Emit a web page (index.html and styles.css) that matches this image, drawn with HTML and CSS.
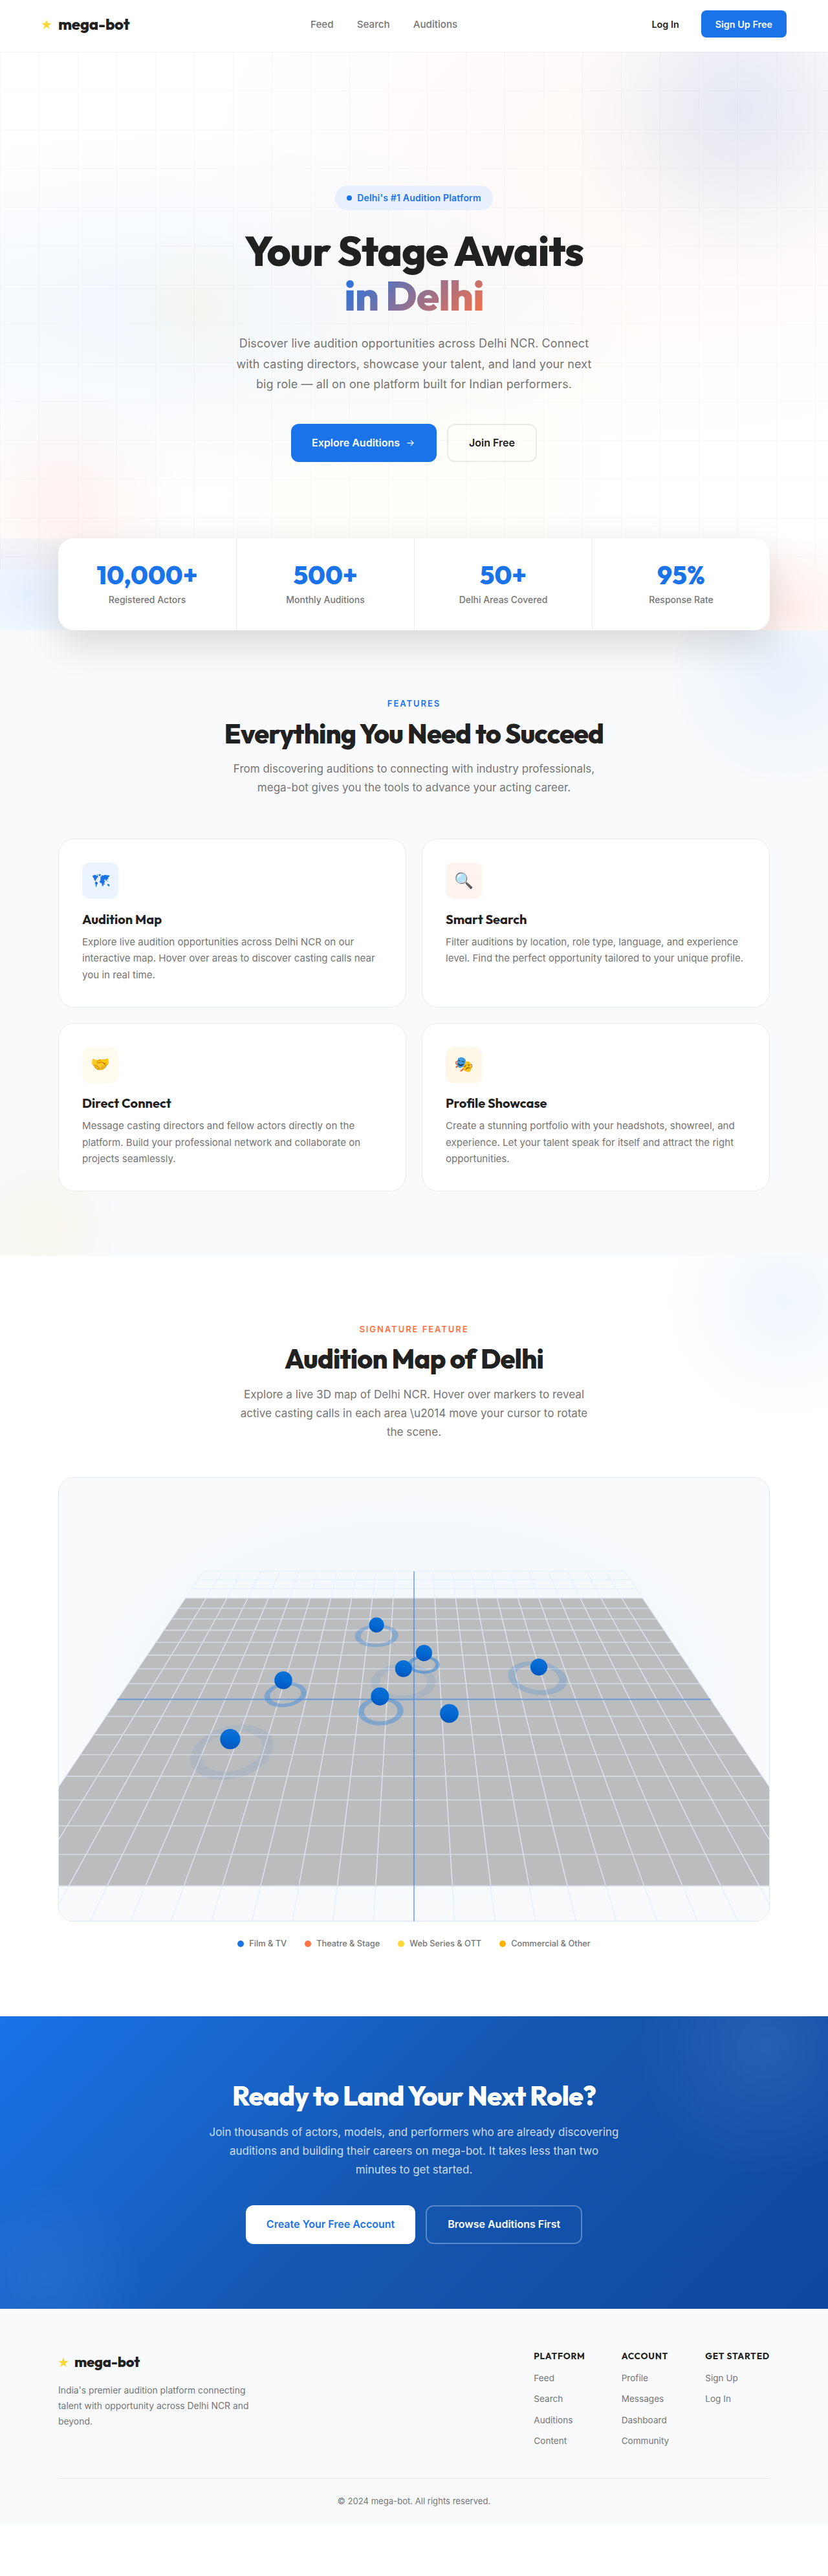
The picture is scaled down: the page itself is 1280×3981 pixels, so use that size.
FILE: index.html
```html
<!DOCTYPE html>
<html lang="en">
<head>
<meta charset="utf-8">
<title>mega-bot</title>
<link rel="stylesheet" href="styles.css">
</head>
<body>
<header class="nav">
  <a class="logo"><svg class="star" viewBox="0 0 16 15.2"><path d="M8 0l1.89 5.8H16l-4.95 3.6 1.89 5.8L8 11.6l-4.94 3.6 1.89-5.8L0 5.8h6.11z"/></svg>mega-bot</a>
  <nav class="nav-links"><a>Feed</a><a>Search</a><a>Auditions</a></nav>
  <div class="nav-actions"><a class="login">Log In</a><a class="signup">Sign Up Free</a></div>
</header>

<section class="hero">
  <div class="pill"><i></i>Delhi's #1 Audition Platform</div>
  <h1>Your Stage Awaits<br><span>in Delhi</span></h1>
  <p>Discover live audition opportunities across Delhi NCR. Connect with casting directors, showcase your talent, and land your next big role — all on one platform built for Indian performers.</p>
  <div class="actions"><a class="btn primary">Explore Auditions <span class="arrow">→</span></a><a class="btn outline">Join Free</a></div>
</section>

<section class="stats">
  <div class="stats-card">
    <div class="stat"><b>10,000+</b><span>Registered Actors</span></div>
    <div class="stat"><b>500+</b><span>Monthly Auditions</span></div>
    <div class="stat"><b>50+</b><span>Delhi Areas Covered</span></div>
    <div class="stat"><b>95%</b><span>Response Rate</span></div>
  </div>
</section>

<section class="section features">
  <div class="head">
    <div class="label">Features</div>
    <h2>Everything You Need to Succeed</h2>
    <p>From discovering auditions to connecting with industry professionals, mega-bot gives you the tools to advance your acting career.</p>
  </div>
  <div class="cards">
    <article class="card">
      <div class="icon blue"><svg width="26" height="20" viewBox="0 0 26 20"><path d="M0 2.5L2 1.5 4 1 6 2 7 3 8 2l1 1.5L8 5 6.500 6 6 8 5 8.500 5.500 10 4.500 10.500 2.500 8.500 2 6 .5 4.500zM6.500 1L8.500 0 8 1.500 7 2zM10 0l3 .5-.5 1.500-2 1.500L9.500 2zM4 12l2-.5L8 13v2l-1.500 1.500L6 19.500H5L4.800 16 4 14zM12 4.500l1.500-.5 0-1.500 1.500-.8 2 .3L19 1l3 .5 4 .3v2l-1.500.5V6l-1 1v1.500l-1.500-.3-.5 2-.8.3-.7-2.200-1.500.2L17.500 10h1.700l-.7 3-.8 1-.2 2-1.500 2.500H15L14.300 14l-2.300-.5-1-1.700L11.500 10l1-1-.5-1.500 1-1-1-.5zM18.300 14l.7.5-.6 2-.6-.5zM22 10l2 .5.300.8-1.500-.3zM23 15.500l2-.5 1 1.200V19l-1.300-.5-1.700-1.500z"/></svg></div>
      <h3>Audition Map</h3>
      <p>Explore live audition opportunities across Delhi NCR on our interactive map. Hover over areas to discover casting calls near you in real time.</p>
    </article>
    <article class="card">
      <div class="icon coral">🔍</div>
      <h3>Smart Search</h3>
      <p>Filter auditions by location, role type, language, and experience level. Find the perfect opportunity tailored to your unique profile.</p>
    </article>
    <article class="card">
      <div class="icon yellow">🤝</div>
      <h3>Direct Connect</h3>
      <p>Message casting directors and fellow actors directly on the platform. Build your professional network and collaborate on projects seamlessly.</p>
    </article>
    <article class="card">
      <div class="icon amber">🎭</div>
      <h3>Profile Showcase</h3>
      <p>Create a stunning portfolio with your headshots, showreel, and experience. Let your talent speak for itself and attract the right opportunities.</p>
    </article>
  </div>
</section>

<section class="section map-section">
  <div class="head">
    <div class="label coral-text">Signature Feature</div>
    <h2>Audition Map of Delhi</h2>
    <p>Explore a live 3D map of Delhi NCR. Hover over markers to reveal active casting calls in each area \u2014 move your cursor to rotate the scene.</p>
  </div>
  <div class="map">
    <svg id="scene" viewBox="0 0 1098 685.5">
      <defs>
        <linearGradient id="ball" x1=".55" y1="0" x2=".4" y2="1">
          <stop offset="0" stop-color="#0a70d6"/><stop offset=".5" stop-color="#0369d3"/><stop offset="1" stop-color="#0054bd"/>
        </linearGradient>
      </defs>
    </svg>
  </div>
  <div class="legend">
    <span><i class="c-blue"></i>Film &amp; TV</span><span><i class="c-coral"></i>Theatre &amp; Stage</span><span><i class="c-yellow"></i>Web Series &amp; OTT</span><span><i class="c-amber"></i>Commercial &amp; Other</span>
  </div>
</section>

<section class="cta">
  <h2>Ready to Land Your Next Role?</h2>
  <p>Join thousands of actors, models, and performers who are already discovering auditions and building their careers on mega-bot. It takes less than two minutes to get started.</p>
  <div class="actions"><a class="btn white">Create Your Free Account</a><a class="btn ghost">Browse Auditions First</a></div>
</section>

<footer class="footer">
  <div class="footer-top">
    <div class="about">
      <a class="logo"><svg class="star" viewBox="0 0 16 15.2"><path d="M8 0l1.89 5.8H16l-4.95 3.6 1.89 5.8L8 11.6l-4.94 3.6 1.89-5.8L0 5.8h6.11z"/></svg>mega-bot</a>
      <p>India's premier audition platform connecting talent with opportunity across Delhi NCR and beyond.</p>
    </div>
    <div class="cols">
      <div class="col"><h4>Platform</h4><a>Feed</a><a>Search</a><a>Auditions</a><a>Content</a></div>
      <div class="col"><h4>Account</h4><a>Profile</a><a>Messages</a><a>Dashboard</a><a>Community</a></div>
      <div class="col"><h4>Get Started</h4><a>Sign Up</a><a>Log In</a></div>
    </div>
  </div>
  <div class="copy">© 2024 mega-bot. All rights reserved.</div>
</footer>
<script src="map.js"></script>
</body>
</html>
```
FILE: styles.css
```css
* {
  box-sizing: border-box;
  margin: 0;
  padding: 0;
}
body {
  font-family: Inter, "Liberation Sans", sans-serif;
  color: #212121;
  background: #fff;
  line-height: 1.6;
}
h1, h2, h3, h4, .logo, .stat b {
  font-family: Outfit, Lato, sans-serif;
}

/* Navigation */
.nav {
  height: 80px;
  padding: 0 64px 6px;
  display: flex;
  align-items: center;
  background: #fff;
}
.logo {
  display: flex;
  align-items: center;
  gap: 10px;
  font-weight: 800;
  font-size: 24px;
  letter-spacing: -.01em;
  line-height: 1.6;
}
.nav .logo {
  width: 416px;
  padding-top: 1px;
}
.star {
  width: 16px;
  height: 15.2px;
  fill: #fdd835;
}
.nav-links {
  display: flex;
  gap: 36px;
  padding-top: 2px;
  font-size: 15.2px;
  font-weight: 500;
  color: #757575;
}
.nav-actions {
  display: flex;
  align-items: center;
  gap: 34px;
  margin-left: auto;
  font-size: 14.4px;
  font-weight: 600;
}
.login {
  padding-top: 1px;
}
.signup {
  height: 42px;
  padding: 10px 22px;
  border-radius: 8px;
  background: #1a73e8;
  color: #fff;
  line-height: 23px;
}

/* Hero */
.hero {
  height: 800px;
  padding-top: 207px;
  display: flex;
  flex-direction: column;
  align-items: center;
  text-align: center;
  background:
    linear-gradient(rgba(0, 0, 0, .022) 1px, transparent 1px) 0 0 / 60px 60px,
    linear-gradient(90deg, rgba(0, 0, 0, .022) 1px, transparent 1px) 0 0 / 60px 60px,
    radial-gradient(circle at 1143px 90px, rgba(26, 105, 222, .11), rgba(26, 100, 215, .065) 110px, rgba(26, 100, 215, .02) 200px, transparent 265px),
    radial-gradient(circle at 300px 390px, rgba(253, 216, 53, .075), rgba(253, 216, 53, .03) 60px, transparent 115px),
    radial-gradient(circle at 100px 705px, rgba(255, 95, 67, .085), rgba(255, 95, 67, .045) 80px, transparent 185px),
    radial-gradient(ellipse at 20% 50%, rgba(26, 115, 232, .06), transparent 50%),
    radial-gradient(ellipse at 80% 20%, rgba(255, 112, 67, .05), transparent 50%),
    radial-gradient(ellipse at 50% 80%, rgba(253, 216, 53, .03), transparent 50%);
  box-shadow: inset 0 1px rgba(0, 0, 0, .02);
}
.pill {
  height: 38px;
  padding: 0 18px;
  display: flex;
  align-items: center;
  gap: 8px;
  border-radius: 100px;
  background: #e8effd;
  color: #1a73e8;
  font-size: 14px;
  font-weight: 600;
  letter-spacing: .2px;
}
.pill i {
  width: 8px;
  height: 8px;
  border-radius: 50%;
  background: #1a73e8;
}
h1 {
  margin: 28px 0 24px;
  font-size: 64px;
  font-weight: 800;
  line-height: 69px;
  letter-spacing: -1px;
}
h1 span {
  background: linear-gradient(135deg, #1a73e8, #ff7043);
  -webkit-background-clip: text;
  background-clip: text;
  color: transparent;
}
.hero p {
  width: 560px;
  font-size: 18px;
  line-height: 31.5px;
  letter-spacing: .1px;
  color: #757575;
}
.actions {
  display: flex;
  justify-content: center;
  gap: 16px;
}
.hero .actions {
  margin-top: 45px;
}
.btn {
  height: 59.6px;
  padding: 0 32px;
  display: flex;
  align-items: center;
  gap: 8px;
  border-radius: 12px;
  font-size: 16px;
  font-weight: 600;
}
.primary {
  background: #1a73e8;
  color: #fff;
}
.arrow {
  width: 17px;
  font-size: 14px;
  font-weight: 400;
  text-align: center;
}
.outline {
  border: 2px solid rgba(0, 0, 0, .08);
}

/* Stats */
.stats {
  margin-top: -48px;
  padding: 0 90px;
  position: relative;
  background:
    radial-gradient(circle at 40px 85px, rgba(26, 115, 232, .11), transparent 150px),
    radial-gradient(circle at 1225px 110px, rgba(255, 95, 67, .1), transparent 125px);
}
.stats-card {
  height: 142px;
  display: grid;
  grid-template-columns: repeat(4, 1fr);
  border-radius: 24px;
  background: #fff;
  box-shadow: 0 20px 60px rgba(0, 0, 0, .14);
}
.stat {
  padding-top: 32px;
  display: flex;
  flex-direction: column;
  align-items: center;
}
.stat + .stat {
  border-left: 1px solid #ececec;
}
.stat b {
  font-size: 40px;
  font-weight: 800;
  line-height: 48px;
  color: #1a73e8;
}
.stat span {
  margin-top: 4px;
  font-size: 14px;
  font-weight: 500;
  color: #757575;
}

/* Shared section parts */
.section {
  padding: 100px 90px;
}
.head {
  width: 564px;
  margin: 0 auto 55.2px;
  display: flex;
  flex-direction: column;
  align-items: center;
  text-align: center;
}
.label {
  font-size: 13px;
  font-weight: 600;
  line-height: 27px;
  letter-spacing: .15em;
  text-transform: uppercase;
  color: #1a73e8;
}
.coral-text {
  color: #ff7043;
}
h2 {
  font-size: 41.6px;
  font-weight: 800;
  line-height: 48px;
  letter-spacing: -.02em;
  white-space: nowrap;
}
.head h2 {
  margin: 8.600px 0 16.400px;
  font-size: 41.300px;
}
.head p, .cta p {
  font-size: 17.05px;
  line-height: 28.9px;
  color: #757575;
}
.map-section .head p {
  width: 556px;
  font-size: 17.1px;
}

/* Features */
.features {
  background:
    radial-gradient(circle at 1210px 66px, rgba(26, 115, 232, .07), rgba(26, 115, 232, .035) 85px, transparent 175px),
    radial-gradient(circle at 65px 920px, rgba(253, 216, 53, .075), transparent 125px),
    #f8fafc;
}
.features .head {
  margin-bottom: 64.6px;
}
.cards {
  display: grid;
  grid-template-columns: 1fr 1fr;
  gap: 24px;
}
.card {
  height: 260.200px;
  padding: 36px;
  border: 1px solid #e9ebed;
  border-radius: 24px;
  background: #fff;
}
.icon {
  width: 56px;
  height: 56px;
  display: flex;
  align-items: center;
  justify-content: center;
  border-radius: 12px;
  font-size: 24px;
}
.icon svg {
  display: block;
  margin: -1px 0 0 1px;
  fill: #1a73e8;
}
.blue { background: #ebf3fe; }
.coral { background: #fff3ef; }
.yellow { background: #fffbee; }
.amber { background: #fff8e9; }
h3 {
  margin: 18.600px 0 9px;
  font-size: 20px;
  font-weight: 700;
  line-height: 26px;
}
.card p {
  font-size: 15.1px;
  line-height: 25.5px;
  color: #757575;
}

/* Map */
.map-section {
  padding-bottom: 101.300px;
  background: radial-gradient(circle at 1211px 69px, rgba(26, 115, 232, .065), rgba(26, 115, 232, .03) 90px, transparent 185px);
}
.map {
  height: 687.5px;
  border: 1px solid #e6e8ea;
  border-radius: 24px;
  overflow: hidden;
  background: radial-gradient(ellipse at center, #eff6fc, #f8fafc 70%);
}
.map svg {
  display: block;
  width: 100%;
}
.legend {
  margin-top: 24px;
  display: flex;
  justify-content: center;
  gap: 28px;
  font-size: 12.800px;
  font-weight: 500;
  color: #757575;
}
.legend span {
  display: flex;
  align-items: center;
  gap: 8px;
}
.legend i {
  width: 10px;
  height: 10px;
  border-radius: 50%;
}
.c-blue { background: #1a73e8; }
.c-coral { background: #ff7043; }
.c-yellow { background: #fdd835; }
.c-amber { background: #ffb300; }

/* Call to action */
.cta {
  height: 452px;
  padding-top: 99.500px;
  text-align: center;
  color: #fff;
  background:
    radial-gradient(circle at 1185px 50px, rgba(255, 255, 255, .085), rgba(255, 255, 255, .045) 100px, transparent 200px),
    radial-gradient(circle at 70px 405px, rgba(255, 255, 255, .06), transparent 150px),
    linear-gradient(135deg, #1a73e8 0%, #1557b0 50%, #0d47a1 100%);
}
.cta p {
  width: 636px;
  margin: 18px auto 40px;
  font-size: 17px;
  color: rgba(255, 255, 255, .8);
}
.white {
  background: #fff;
  color: #1a73e8;
}
.ghost {
  border: 2px solid rgba(255, 255, 255, .3);
  color: #fff;
}

/* Footer */
.footer {
  padding: 64px 90px 24px;
  border-top: 1px solid #e6e8ea;
  background: #f8fafc;
}
.footer-top {
  height: 198px;
  display: flex;
  justify-content: space-between;
  border-bottom: 1px solid #e2e5e7;
}
.footer .logo {
  gap: 9px;
  font-size: 22px;
}
.about p {
  width: 300px;
  margin-top: 14px;
  font-size: 13.900px;
  line-height: 24px;
  color: #757575;
}
.cols {
  display: flex;
  gap: 56px;
}
.col {
  display: flex;
  flex-direction: column;
  gap: 10.300px;
  font-size: 13.600px;
  line-height: 22px;
  color: #757575;
}
.col h4 {
  margin-bottom: 4.700px;
  font-size: 13.700px;
  font-weight: 700;
  line-height: 16px;
  letter-spacing: .8px;
  text-transform: uppercase;
  color: #212121;
}
.copy {
  padding-top: 24px;
  font-size: 13.100px;
  line-height: 21px;
  text-align: center;
  color: #757575;
}
```
FILE: map.js
```js
// Perspective view of the city grid: camera at (0, 13, 17) looking at the origin.
const DIST = 21.4, SIN = 0.6075, COS = 0.7944, FOCAL = 892, CX = 549, CY = 342.2;
const scene = document.getElementById('scene');

function project(x, z) {
  const s = FOCAL / (DIST - z * COS);
  return [CX + x * s, CY + z * SIN * s];
}
function add(tag, attrs) {
  const el = document.createElementNS('http://www.w3.org/2000/svg', tag);
  for (const key in attrs) el.setAttribute(key, attrs[key]);
  scene.appendChild(el);
}
function path(points, close) {
  return 'M' + points.map(p => p[0].toFixed(2) + ' ' + p[1].toFixed(2)).join('L') + (close ? 'Z' : '');
}
function line(a, b, color, width) {
  add('path', { d: path([project(...a), project(...b)]), stroke: color, 'stroke-width': width, fill: 'none' });
}

// Ground plane
add('path', {
  d: path([project(-11, -8), project(11, -8), project(11, 8), project(-11, 8)], true),
  fill: '#babcbe'
});

// Grid lines; they read brighter over the plane than outside it
for (let i = -11; i <= 11; i++) {
  if (i === 0) continue;
  line([i, -11], [i, -8], '#e6effd', 1.3);
  line([i, -8], [i, 8], '#e3e8f3', 1.3);
  line([i, 8], [i, 11], '#e6effd', 1.3);
  line([-11, i], [11, i], Math.abs(i) <= 8 ? '#d6dbe6' : '#e6effd', Math.abs(i) <= 8 ? 1.6 : 1.4);
}
line([-11, 0], [11, 0], '#6a9adb', 2);
line([0, -11], [0, -8], '#8ab6f2', 2);
line([0, -8], [0, 8], '#6a9adb', 2);
line([0, 8], [0, 11], '#8ab6f2', 2);

// Pulse rings: x, z, outer radius, opacity
const rings = [
  [-1.62, -4.56, 0.94, 0.32], [0.39, -2.31, 0.64, 0.5], [-0.41, -1.14, 1.24, 0.1],
  [-4.82, -0.31, 0.78, 0.38], [-1.2, 0.68, 0.82, 0.38], [-6.03, 2.81, 1.34, 0.08],
  [4.81, -1.41, 1.14, 0.2]
];
for (const [x, z, r, opacity] of rings) {
  const circle = radius => Array.from({ length: 72 }, (_, i) => {
    const a = i * Math.PI / 36;
    return project(x + radius * Math.cos(a), z + radius * Math.sin(a));
  });
  add('path', {
    d: path(circle(r), true) + path(circle(r * 0.735), true),
    fill: '#257fdc', 'fill-rule': 'evenodd', 'fill-opacity': opacity
  });
}

// Markers: screen position and radius
const markers = [
  [491, 227.2, 11.6], [564.5, 270.7, 12.6], [532.7, 294.7, 13], [347, 312.7, 13.8],
  [496.3, 337.7, 14], [264.9, 403.7, 15.6], [742, 292.3, 13.1], [603.5, 364, 14.4]
];
for (const [cx, cy, r] of markers) add('circle', { cx, cy, r, fill: 'url(#ball)' });
```
